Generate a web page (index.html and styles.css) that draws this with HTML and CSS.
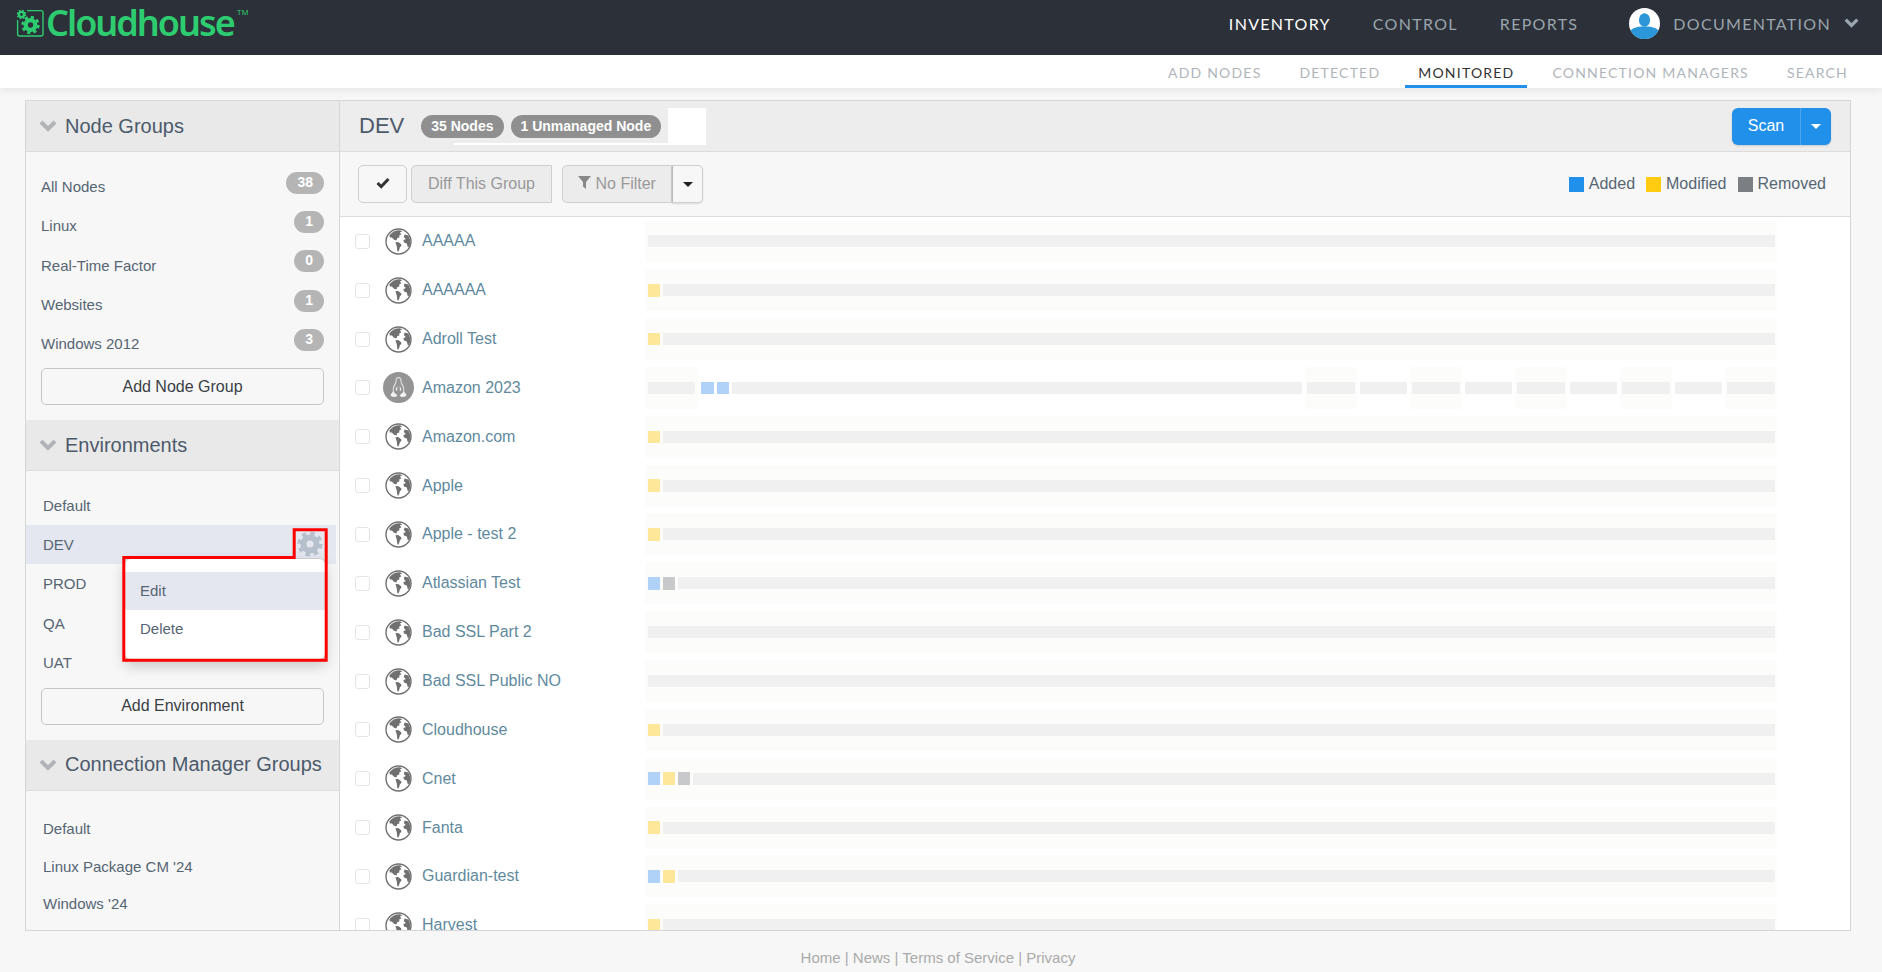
FILE: index.html
```html
<!DOCTYPE html>
<html lang="en">
<head>
    <meta charset="UTF-8">
    <title>Cloudhouse - Monitored</title>
    <link rel="stylesheet" href="styles.css">
</head>
<body>

    <!-- shared icons -->
    <svg class="icon-defs" width="0" height="0">
        <symbol id="globe" viewBox="0 0 27 27">
            <circle cx="13.5" cy="13.5" r="12.5" fill="#fff" stroke="#707070" stroke-width="1.4"/>
            <path fill="#707070" d="M4.4 7.2 C7 4 10.8 2 15 2.2 L17.2 3.6 L14.8 4.6 L16.4 6.2 L14.2 7.4 L14.4 9.4 L12.4 10 L11.4 12.4 L9 11.8 L6.8 9.4 L4.8 9.4 Z"/>
            <path fill="#707070" d="M10.4 14.2 L13.2 14 L16.2 16.2 L16.4 17.8 L14.8 19.6 L14.2 22 L13 24 L12.2 22.2 L11.8 18.4 Z"/>
            <path fill="#707070" d="M19.6 6.6 L23.4 7.4 C25.2 10.2 25.6 13.6 25 16.4 L23.8 19.2 L22.6 18.8 L21.8 15.4 L19 14.6 L18.4 12.2 L20.8 10.9 L18.8 8.9 Z"/>
        </symbol>
        <symbol id="tux" viewBox="0 0 31 31">
            <circle cx="15.5" cy="15.5" r="15.5" fill="#949494"/>
            <path fill="none" stroke="#dedede" stroke-width="1.2" d="M15.5 5.6 C13.4 5.6 12.8 7.4 13 9.4 C13.1 11 11.4 13 10.6 15.4 C9.9 17.6 10 19 10.6 20.2 M15.5 5.6 C17.6 5.6 18.2 7.4 18 9.4 C17.9 11 19.6 13 20.4 15.4 C21.1 17.6 21 19 20.4 20.2"/>
            <path fill="#f2f2f2" d="M7.4 23 L10 19.6 L12.4 21.6 L14.4 23.6 L12.6 25 L9 24.8 Z M23.6 23 L21 19.6 L18.6 21.6 L16.6 23.6 L18.4 25 L22 24.8 Z M12.6 17 L14.4 14 L14 19.4 Z M18.4 17 L16.6 14 L17 19.4 Z"/>
        </symbol>
        <symbol id="chev" viewBox="0 0 18 12">
            <path d="M2 2 L9 9 L16 2" fill="none" stroke="currentColor" stroke-width="4"/>
        </symbol>
        <symbol id="gear" viewBox="0 0 26 26">
            <circle cx="13" cy="13" r="6.6" fill="none" stroke="currentColor" stroke-width="6"/>
            <circle cx="13" cy="13" r="10.6" fill="none" stroke="currentColor" stroke-width="4" stroke-dasharray="4.3 4.03"/>
        </symbol>
    </svg>

    <header class="topbar">
        <a class="brand" href="#">
            <svg class="brand-mark" width="31" height="31" viewBox="0 0 31 31">
                <path d="M12 3.6 H26 a2 2 0 0 1 2 2 V27 a2 2 0 0 1 -2 2 H4.6 a2 2 0 0 1 -2 -2 V13" fill="none" stroke="#2ecc71" stroke-width="1.4"/>
                <use href="#gear" x="6" y="8.5" width="19" height="19" color="#2ecc71"/>
                <use href="#gear" x="1.5" y="2.5" width="10" height="10" color="#2ecc71"/>
            </svg>
            <span class="brand-name">Cloudhouse</span>
            <span class="brand-tm">TM</span>
        </a>
        <nav class="mainnav">
            <a class="active" href="#">INVENTORY</a>
            <a href="#">CONTROL</a>
            <a href="#">REPORTS</a>
        </nav>
        <a class="user" href="#">
            <svg class="avatar" width="31" height="31" viewBox="0 0 31 31">
                <circle cx="15.5" cy="15.5" r="15.5" fill="#fff"/>
                <ellipse cx="15.5" cy="12" rx="5.6" ry="6.8" fill="#2b96d8"/>
                <path d="M1.6 22.5 C5 19 10 18.6 15.5 18.6 C21 18.6 26 19 29.4 22.5 A15.5 15.5 0 0 1 1.6 22.5 Z" fill="#2b96d8"/>
            </svg>
            <span>DOCUMENTATION</span>
            <svg class="user-chev" width="15" height="10"><use href="#chev"/></svg>
        </a>
    </header>

    <nav class="subnav">
        <a href="#">ADD NODES</a>
        <a href="#">DETECTED</a>
        <a class="active" href="#">MONITORED</a>
        <a href="#">CONNECTION MANAGERS</a>
        <a href="#">SEARCH</a>
    </nav>

    <div class="panel">

        <aside class="sidebar">
            <h3 class="side-head"><svg class="side-chev" width="18" height="12"><use href="#chev"/></svg>Node Groups</h3>
            <div class="side-body groups">
                <a class="side-item" href="#">All Nodes <span class="count">38</span></a>
                <a class="side-item" href="#">Linux <span class="count">1</span></a>
                <a class="side-item" href="#">Real-Time Factor <span class="count">0</span></a>
                <a class="side-item" href="#">Websites <span class="count">1</span></a>
                <a class="side-item" href="#">Windows 2012 <span class="count">3</span></a>
                <button class="side-btn">Add Node Group</button>
            </div>

            <h3 class="side-head"><svg class="side-chev" width="18" height="12"><use href="#chev"/></svg>Environments</h3>
            <div class="side-body env">
                <a class="side-item" href="#">Default</a>
                <div class="side-item selected">
                    DEV
                    <svg class="cog" width="26" height="26"><use href="#gear"/></svg>
                    <div class="menu">
                        <a class="menu-item hover" href="#">Edit</a>
                        <a class="menu-item" href="#">Delete</a>
                    </div>
                    <!-- red annotation round the cog and the menu -->
                    <svg class="callout" width="206" height="136">
                        <path d="M1.8 30.5 H172.2 V2.8 H204.2 V133.2 H1.8 Z" fill="none" stroke="#f00" stroke-width="3"/>
                    </svg>
                </div>
                <a class="side-item" href="#">PROD</a>
                <a class="side-item" href="#">QA</a>
                <a class="side-item" href="#">UAT</a>
                <button class="side-btn">Add Environment</button>
            </div>

            <h3 class="side-head"><svg class="side-chev" width="18" height="12"><use href="#chev"/></svg>Connection Manager Groups</h3>
            <div class="side-body cm">
                <a class="side-item" href="#">Default</a>
                <a class="side-item" href="#">Linux Package CM '24</a>
                <a class="side-item" href="#">Windows '24</a>
            </div>
        </aside>

        <main class="content">
            <div class="content-head">
                <h2>DEV</h2>
                <span class="pill">35 Nodes</span>
                <span class="pill">1 Unmanaged Node</span>
                <span class="blank"></span>
                <div class="scan">
                    <button class="scan-main">Scan</button>
                    <button class="scan-caret"><span class="caret"></span></button>
                </div>
            </div>

            <div class="toolbar">
                <button class="tool check">
                    <svg width="14" height="12" viewBox="0 0 14 12"><path d="M1.5 6 L5.2 9.6 L12.5 2" fill="none" stroke="#333" stroke-width="3"/></svg>
                </button>
                <button class="tool diff">Diff This Group</button>
                <button class="tool filter">
                    <svg width="13" height="13" viewBox="0 0 13 13"><path d="M0 0 H13 L8 6 V13 L5 10.5 V6 Z" fill="#888"/></svg>
                    No Filter
                </button>
                <button class="tool filter-caret"><span class="caret dark"></span></button>
                <div class="legend">
                    <span class="key added"></span>Added
                    <span class="key modified"></span>Modified
                    <span class="key removed"></span>Removed
                </div>
            </div>

            <div class="nodes">
                <div class="node">
                    <span class="tick"></span>
                    <svg class="os" width="27" height="27"><use href="#globe"/></svg>
                    <a class="name" href="#">AAAAA</a>
                    <div class="track"><span class="bar"></span></div>
                </div>
                <div class="node">
                    <span class="tick"></span>
                    <svg class="os" width="27" height="27"><use href="#globe"/></svg>
                    <a class="name" href="#">AAAAAA</a>
                    <div class="track"><span class="sq y"></span><span class="bar"></span></div>
                </div>
                <div class="node">
                    <span class="tick"></span>
                    <svg class="os" width="27" height="27"><use href="#globe"/></svg>
                    <a class="name" href="#">Adroll Test</a>
                    <div class="track"><span class="sq y"></span><span class="bar"></span></div>
                </div>
                <div class="node">
                    <span class="tick"></span>
                    <svg class="os" width="31" height="31"><use href="#tux"/></svg>
                    <a class="name" href="#">Amazon 2023</a>
                    <div class="track split">
                        <span class="cell first"><span class="bar"></span></span>
                        <span class="sq b"></span><span class="sq b"></span>
                        <span class="bar"></span>
                        <span class="cell"><span class="bar"></span></span>
                        <span class="bar short"></span>
                        <span class="cell"><span class="bar"></span></span>
                        <span class="bar short"></span>
                        <span class="cell"><span class="bar"></span></span>
                        <span class="bar short"></span>
                        <span class="cell"><span class="bar"></span></span>
                        <span class="bar short"></span>
                        <span class="cell"><span class="bar"></span></span>
                    </div>
                </div>
                <div class="node">
                    <span class="tick"></span>
                    <svg class="os" width="27" height="27"><use href="#globe"/></svg>
                    <a class="name" href="#">Amazon.com</a>
                    <div class="track"><span class="sq y"></span><span class="bar"></span></div>
                </div>
                <div class="node">
                    <span class="tick"></span>
                    <svg class="os" width="27" height="27"><use href="#globe"/></svg>
                    <a class="name" href="#">Apple</a>
                    <div class="track"><span class="sq y"></span><span class="bar"></span></div>
                </div>
                <div class="node">
                    <span class="tick"></span>
                    <svg class="os" width="27" height="27"><use href="#globe"/></svg>
                    <a class="name" href="#">Apple - test 2</a>
                    <div class="track"><span class="sq y"></span><span class="bar"></span></div>
                </div>
                <div class="node">
                    <span class="tick"></span>
                    <svg class="os" width="27" height="27"><use href="#globe"/></svg>
                    <a class="name" href="#">Atlassian Test</a>
                    <div class="track"><span class="sq b"></span><span class="sq g"></span><span class="bar"></span></div>
                </div>
                <div class="node">
                    <span class="tick"></span>
                    <svg class="os" width="27" height="27"><use href="#globe"/></svg>
                    <a class="name" href="#">Bad SSL Part 2</a>
                    <div class="track"><span class="bar"></span></div>
                </div>
                <div class="node">
                    <span class="tick"></span>
                    <svg class="os" width="27" height="27"><use href="#globe"/></svg>
                    <a class="name" href="#">Bad SSL Public NO</a>
                    <div class="track"><span class="bar"></span></div>
                </div>
                <div class="node">
                    <span class="tick"></span>
                    <svg class="os" width="27" height="27"><use href="#globe"/></svg>
                    <a class="name" href="#">Cloudhouse</a>
                    <div class="track"><span class="sq y"></span><span class="bar"></span></div>
                </div>
                <div class="node">
                    <span class="tick"></span>
                    <svg class="os" width="27" height="27"><use href="#globe"/></svg>
                    <a class="name" href="#">Cnet</a>
                    <div class="track"><span class="sq b"></span><span class="sq y"></span><span class="sq g"></span><span class="bar"></span></div>
                </div>
                <div class="node">
                    <span class="tick"></span>
                    <svg class="os" width="27" height="27"><use href="#globe"/></svg>
                    <a class="name" href="#">Fanta</a>
                    <div class="track"><span class="sq y"></span><span class="bar"></span></div>
                </div>
                <div class="node">
                    <span class="tick"></span>
                    <svg class="os" width="27" height="27"><use href="#globe"/></svg>
                    <a class="name" href="#">Guardian-test</a>
                    <div class="track"><span class="sq b"></span><span class="sq y"></span><span class="bar"></span></div>
                </div>
                <div class="node">
                    <span class="tick"></span>
                    <svg class="os" width="27" height="27"><use href="#globe"/></svg>
                    <a class="name" href="#">Harvest</a>
                    <div class="track"><span class="sq y"></span><span class="bar"></span></div>
                </div>
            </div>
        </main>
    </div>

    <footer class="footer">
        <a href="#">Home</a> | <a href="#">News</a> | <a href="#">Terms of Service</a> | <a href="#">Privacy</a>
    </footer>

</body>
</html>
```

FILE: styles.css
```css
* {
    box-sizing: border-box;
}

body {
    margin: 0;
    height: 972px;
    overflow: hidden;
    background-color: #f7f7f7;
    font-family: "Liberation Sans", Arial, sans-serif;
    color: #566573;
}

a {
    color: inherit;
    text-decoration: none;
}

button {
    font-family: inherit;
}

.icon-defs {
    position: absolute;
}

/* top bar */
.topbar {
    height: 55px;
    background-color: #2c3038;
    display: flex;
    align-items: center;
    padding: 0 23px 9px 15px;
}

.brand {
    display: flex;
    align-items: flex-start;
    margin-right: auto;
}

.brand-mark {
    margin-top: 8px;
}

.brand-name {
    font-family: "Noto Sans", sans-serif;
    font-size: 36px;
    font-weight: 600;
    line-height: 48px;
    letter-spacing: -2px;
    color: #2ecc71;
}

.brand-tm {
    font-size: 8px;
    color: #2ecc71;
    margin: 9px 0 0 3px;
}

.mainnav {
    display: flex;
    gap: 42px;
    font-family: Lato, sans-serif;
    font-size: 16px;
    letter-spacing: 1.3px;
    color: #9aa5ad;
}

.mainnav .active {
    color: #fff;
}

.user {
    display: flex;
    align-items: center;
    margin-left: 51px;
    font-family: Lato, sans-serif;
    font-size: 16px;
    letter-spacing: 1.3px;
    color: #9aa5ad;
}

.avatar {
    margin-right: 13px;
}

.user-chev {
    margin-left: 13px;
    color: #9aa5ad;
}

/* sub navigation */
.subnav {
    height: 33px;
    background-color: #fff;
    box-shadow: 0 2px 8px rgba(0, 0, 0, 0.08);
    display: flex;
    justify-content: flex-end;
    padding-right: 21px;
    font-family: Lato, sans-serif;
    font-size: 14px;
    letter-spacing: 1.2px;
    color: #b0b5bb;
}

.subnav a {
    padding: 9px 13px 0;
    margin-left: 12px;
}

.subnav a.active {
    color: #333;
    border-bottom: 3px solid #2190ea;
}

/* main panel */
.panel {
    display: flex;
    height: 831px;
    margin: 12px 31px 0 25px;
    border: 1px solid #d6d6d6;
    overflow: hidden;
}

.sidebar {
    width: 314px;
    flex-shrink: 0;
    background-color: #f7f7f7;
    border-right: 1px solid #d6d6d6;
}

.side-head {
    display: flex;
    align-items: center;
    gap: 8px;
    height: 51px;
    margin: 0;
    padding-left: 13px;
    background-color: #e9e9e9;
    border-bottom: 1px solid #dcdcdc;
    font-size: 20px;
    font-weight: normal;
    color: #4c5a6b;
}

.side-chev {
    color: #b0b4b8;
}

.side-body {
    padding: 14px 0 15px;
}

.side-item {
    display: flex;
    align-items: center;
    justify-content: space-between;
    height: 39.3px;
    padding: 0 15px;
    font-size: 15px;
}

.groups .side-item {
    padding-top: 2px;
}

.env .side-item,
.cm .side-item {
    padding-left: 17px;
}

.cm {
    padding-top: 19px;
}

.cm .side-item {
    height: 37.5px;
}

.count {
    margin-top: -8px;
    padding: 0 11px;
    height: 22px;
    line-height: 21px;
    border-radius: 11px;
    background-color: #b5b5b5;
    color: #fff;
    font-size: 14px;
    font-weight: bold;
}

.side-btn {
    display: block;
    width: 283px;
    height: 37px;
    margin: 6px 0 0 15px;
    background-color: #f7f7f7;
    border: 1px solid #c5c5c5;
    border-radius: 5px;
    font-size: 16px;
    color: #3a3f45;
}

.selected {
    position: relative;
    margin-right: 3px;
    background-color: #e4e7ef;
}

.cog {
    margin-right: -2px;
    color: #b5c0cc;
}

.menu {
    position: absolute;
    top: 33px;
    left: 98px;
    width: 202px;
    height: 102px;
    padding: 13px 0 0;
    background-color: #fff;
    border: 1px solid #ccc;
    border-radius: 7px;
    box-shadow: 0 6px 14px rgba(0, 0, 0, 0.2);
    z-index: 2;
}

.menu-item {
    display: block;
    height: 38px;
    line-height: 37px;
    padding-left: 15px;
    font-size: 15px;
}

.menu-item.hover {
    background-color: #e4e7ef;
}

.callout {
    position: absolute;
    top: 2px;
    left: 96px;
    z-index: 3;
}

/* content column */
.content {
    flex: 1;
    background-color: #fff;
    min-width: 0;
}

.content-head {
    display: flex;
    align-items: center;
    height: 51px;
    padding: 0 19px;
    background-color: #ededed;
    border-bottom: 1px solid #dcdcdc;
}

.content-head h2 {
    margin: 0 17px 0 0;
    font-size: 22px;
    font-weight: normal;
    color: #4c5a6b;
}

.pill {
    height: 23px;
    line-height: 22px;
    padding: 0 10px;
    margin-right: 7px;
    border-radius: 12px;
    background-color: #8f8f8f;
    color: #fff;
    font-size: 14px;
    font-weight: bold;
}

.blank {
    position: relative;
    width: 38px;
    height: 37px;
    background-color: #fff;
    margin-right: auto;
}

.blank::after {
    content: "";
    position: absolute;
    right: 38px;
    bottom: 0;
    width: 214px;
    height: 2px;
    background-color: #fff;
}

.scan {
    display: flex;
    height: 37px;
    border-radius: 6px;
    background-color: #2190ea;
    box-shadow: 0 1px 2px rgba(0, 0, 0, 0.15);
}

.scan button {
    background: none;
    border: none;
    color: #fff;
}

.scan-main {
    width: 68px;
    font-size: 16px;
}

.scan .scan-caret {
    width: 31px;
    border-left: 1px solid #4aa5ef;
}

.caret {
    display: block;
    width: 0;
    margin: 0 auto;
    border-style: solid;
    border-width: 5px 5px 0;
    border-color: #fff transparent transparent;
}

.caret.dark {
    border-color: #222 transparent transparent;
}

.toolbar {
    display: flex;
    align-items: center;
    height: 65px;
    padding: 0 24px 0 18px;
    background-color: #f7f7f7;
    border-bottom: 1px solid #dcdcdc;
}

.tool {
    height: 38px;
    border: 1px solid #cfcfcf;
    border-radius: 5px;
    background-color: #ececec;
    font-size: 16px;
    color: #999;
}

.check {
    width: 49px;
    margin-right: 4px;
    background-color: #f7f7f7;
}

.diff {
    width: 141px;
    margin-right: 10px;
    border-radius: 5px 0 0 5px;
}

.filter {
    width: 110px;
    border-radius: 5px 0 0 5px;
}

.filter-caret {
    width: 31px;
    border-radius: 0 5px 5px 0;
    background-color: #f7f7f7;
    border-left-color: #bbb;
    box-shadow: 0 1px 2px rgba(0, 0, 0, 0.12);
}

.legend {
    display: flex;
    align-items: center;
    margin-left: auto;
    font-size: 16px;
}

.key {
    width: 15px;
    height: 15px;
    margin: 0 5px 0 11px;
}

.key.added {
    background-color: #2190ea;
}

.key.modified {
    background-color: #ffcc12;
}

.key.removed {
    background-color: #7b7f84;
}

/* node rows */
.nodes {
    height: 713px;
    overflow: hidden;
}

.node {
    display: flex;
    align-items: center;
    height: 48.85px;
    padding-left: 15px;
}

.tick {
    width: 15px;
    height: 15px;
    flex-shrink: 0;
    margin-right: 13px;
    border: 1px solid #e4e4e4;
    border-radius: 3px;
    background-color: #fff;
}

.os {
    width: 31px;
    flex-shrink: 0;
    margin-right: 8px;
}

.name {
    width: 223px;
    flex-shrink: 0;
    font-size: 16px;
    color: #5f8a9e;
}

.track {
    display: flex;
    align-items: center;
    gap: 3px;
    width: 1132px;
    height: 42px;
    padding: 0 2px 0 3px;
    background-color: #fcfcfa;
}

.bar {
    flex: 1;
    height: 12px;
    background-color: #f0f0f0;
}

.bar.short {
    flex: 0 0 47px;
}

.sq {
    width: 12px;
    height: 12.5px;
    flex-shrink: 0;
}

.sq.y {
    background-color: #fee799;
}

.sq.b {
    background-color: #b0d2f8;
}

.sq.g {
    background-color: #c8c9cb;
}

.track.split {
    padding: 0;
    background: none;
}

.split .sq {
    width: 12.5px;
}

.cell {
    display: flex;
    align-items: center;
    flex: 0 0 52px;
    height: 42px;
    padding: 0 2px;
    background-color: #fcfcfa;
}

.cell.first {
    flex-basis: 53px;
    padding: 0 3px;
}

.footer {
    margin: 18px 31px 0 25px;
    text-align: center;
    font-size: 15px;
    color: #aaa;
}
```
